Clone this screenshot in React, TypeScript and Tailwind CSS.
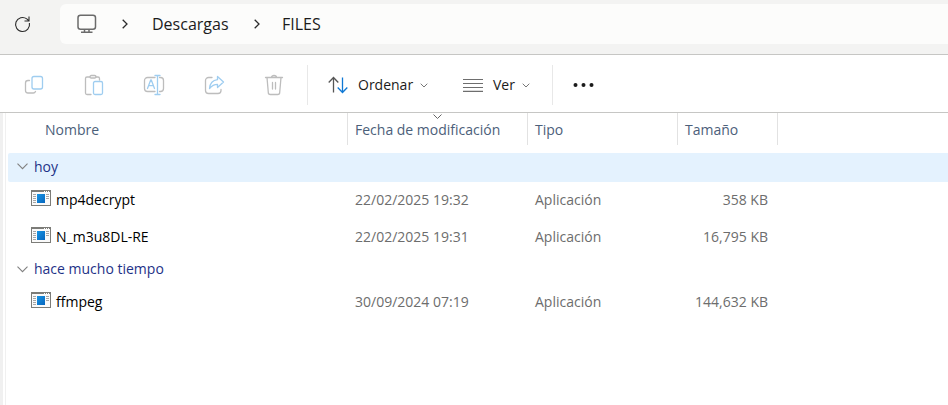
import { Fragment, useState } from "react"
import type { ReactNode } from "react"

interface FileEntry {
    name: string
    modified: string
    type: string
    size: string
}

interface FileGroup {
    label: string
    files: FileEntry[]
}

const GROUPS: FileGroup[] = [
    {
        label: "hoy",
        files: [
            { name: "mp4decrypt", modified: "22/02/2025 19:32", type: "Aplicación", size: "358 KB" },
            { name: "N_m3u8DL-RE", modified: "22/02/2025 19:31", type: "Aplicación", size: "16,795 KB" },
        ],
    },
    {
        label: "hace mucho tiempo",
        files: [
            { name: "ffmpeg", modified: "30/09/2024 07:19", type: "Aplicación", size: "144,632 KB" },
        ],
    },
]

const GRAY = "#bdbdbd"
const BLUE = "#9fcdf0"

function Icon({ children }: { children: ReactNode }) {
    return (
        <svg width="24" height="24" viewBox="0 0 24 24" fill="none" strokeWidth="1.3" strokeLinecap="round" strokeLinejoin="round" aria-hidden="true">
            {children}
        </svg>
    )
}

function CopyIcon() {
    return (
        <Icon>
            <path stroke={GRAY} d="M7.5 7.5H6A2.5 2.5 0 0 0 3.5 10v7.5A2.5 2.5 0 0 0 6 20h5a2.5 2.5 0 0 0 2.5-1.5" />
            <rect stroke={BLUE} x="10" y="3.5" width="10.5" height="12.5" rx="2" />
        </Icon>
    )
}

function PasteIcon() {
    return (
        <Icon>
            <path stroke={GRAY} d="M8 4H5a1.5 1.5 0 0 0-1.5 1.5V20A1.5 1.5 0 0 0 5 21.5h4M13.5 4H16a1.5 1.5 0 0 1 1.5 1.5V7" />
            <rect stroke={GRAY} x="8" y="2.5" width="6" height="2.5" rx="1.2" />
            <rect stroke={BLUE} x="11.5" y="8.5" width="9" height="13" rx="1.5" />
        </Icon>
    )
}

function RenameIcon() {
    return (
        <Icon>
            <path stroke={GRAY} d="M13 4.5H5.5a3 3 0 0 0-3 3v8a3 3 0 0 0 3 3H13M17.5 4.5h1a3 3 0 0 1 3 3v8a3 3 0 0 1-3 3h-1" />
            <path stroke={BLUE} d="M5.5 15.5l3.2-8.5h.6l3.2 8.5M6.700 12.7h4.6" />
            <path stroke={BLUE} d="M15.500 2.500v19M13 2.500h5M13 21.500h5" />
        </Icon>
    )
}

function ShareIcon() {
    return (
        <Icon>
            <path stroke={GRAY} d="M10 4.5H6.5a3 3 0 0 0-3 3v10a3 3 0 0 0 3 3h9.500a3 3 0 0 0 3-3v-1" />
            <path stroke={BLUE} d="M15.500 3.500l6 5.500-6 5.500v-3.200c-3.500 0-5.500 1-8 4.200.5-5 3-8.300 8-8.800z" />
        </Icon>
    )
}

function DeleteIcon() {
    return (
        <Icon>
            <path stroke={GRAY} d="M3.5 4.5h17M9.5 4.5a2.5 2 0 0 1 5 0M5 4.5l1.3 15A2 2 0 0 0 8.3 21.5h7.4a2 2 0 0 0 2-2L19 4.5M10.5 9.5v6.500M13.5 9.5v6.500" />
        </Icon>
    )
}

function SortIcon() {
    return (
        <svg width="20" height="18" viewBox="0 0 20 18" fill="none" strokeWidth="1.3" aria-hidden="true">
            <path stroke="#555555" d="M5.5 16.5v-15M.7 6.5l4.8-5 4.8 5" />
            <path stroke="#0f78d4" d="M14.5 1.5v15M9.7 11.5l4.8 5 4.8-5" />
        </svg>
    )
}

function LinesIcon() {
    return (
        <svg width="20" height="14" viewBox="0 0 20 14" fill="none" stroke="#6e6e6e" strokeWidth="1.2" aria-hidden="true">
            <path d="M0 1.500h20M0 5.500h20M0 9.500h20M0 13.300h20" />
        </svg>
    )
}

function MonitorIcon() {
    return (
        <svg width="20" height="20" viewBox="0 0 20 20" fill="none" stroke="#6b6b6b" strokeWidth="1.5" aria-hidden="true">
            <rect x="1" y="1.2" width="17.5" height="14" rx="2.5" />
            <path d="M7.5 15.5v3M12 15.5v3M4 18.300h11.5" />
        </svg>
    )
}

function RefreshIcon() {
    return (
        <svg width="18" height="18" viewBox="0 0 18 18" fill="none" stroke="#2b2b2b" strokeWidth="1.1" aria-hidden="true">
            <path d="M15.400 8A7 7 0 1 1 12.800 3.900L15 5.800M15 1.500v4.500H10.500" />
        </svg>
    )
}

function CrumbChevron() {
    return (
        <svg width="6" height="10" viewBox="0 0 6 10" fill="none" stroke="#2b2b2b" strokeWidth="1.3" aria-hidden="true">
            <path d="M.7.7L5 5 .7 9.3" />
        </svg>
    )
}

function SmallChevron() {
    return (
        <svg width="8" height="5" viewBox="0 0 8 5" fill="none" stroke="#777777" aria-hidden="true">
            <path d="M.7.7L4 4 7.3.7" />
        </svg>
    )
}

function GroupChevron({ open }: { open: boolean }) {
    return (
        <svg className={open ? "" : "-rotate-90"} width="11" height="7" viewBox="0 0 11 7" fill="none" stroke="#808080" strokeWidth="1.1" aria-hidden="true">
            <path d="M.5.7l5 5 5-5" />
        </svg>
    )
}

function AppIcon() {
    return (
        <svg width="20" height="16" viewBox="0 0 20 16" aria-hidden="true">
            <defs>
                <linearGradient id="appBlue" x1="0" y1="0" x2="1" y2="1">
                    <stop offset="0" stopColor="#1794e4" />
                    <stop offset="1" stopColor="#0766be" />
                </linearGradient>
            </defs>
            <rect x=".5" y=".5" width="19" height="15" fill="#fafafa" stroke="#7c7c78" />
            <path fill="#7c7c78" d="M0 0h20v2H0z" />
            <path stroke="#ffffff" d="M13 1.5h1M15 1.5h1M17 1.5h1" />
            <path stroke="#a6a6a6" d="M2 4.5h3M2 6.5h3M2 8.5h3M2 10.5h3M2 12.5h3M15 4.5h3M15 6.5h3M15 8.5h3" />
            <path fill="url(#appBlue)" d="M6 4h8v9H6z" />
        </svg>
    )
}

const ACTIONS = [
    { label: "Copiar", icon: <CopyIcon /> },
    { label: "Pegar", icon: <PasteIcon /> },
    { label: "Cambiar nombre", icon: <RenameIcon /> },
    { label: "Compartir", icon: <ShareIcon /> },
    { label: "Eliminar", icon: <DeleteIcon /> },
]

function HeaderCell({ label, sorted }: { label: string, sorted?: boolean }) {
    return (
        <th scope="col" className="h-10 p-0 align-top font-normal" aria-sort={sorted ? "descending" : undefined}>
            <button type="button" className="relative flex h-8 w-full items-center border-r border-[#e2e2e2] pl-[7px] pt-[2px] text-left">
                {sorted && (
                    <span className="absolute inset-x-0 top-[1px] flex justify-center">
                        <svg width="9" height="5" viewBox="0 0 9 5" fill="none" stroke="#666666" aria-hidden="true">
                            <path d="M.5.5l4 4 4-4" />
                        </svg>
                    </span>
                )}
                {label}
            </button>
        </th>
    )
}

export default function App() {
    const [closed, setClosed] = useState<string[]>([])

    const toggle = (label: string) => {
        setClosed(closed.includes(label) ? closed.filter((item) => item !== label) : [...closed, label])
    }

    return (
        <div className="flex min-h-screen flex-col bg-white font-['Open_Sans','Noto_Sans',sans-serif] text-sm text-[#1b1b1b]">
            <nav className="flex h-[55px] items-start border-b border-[#c6c6c4] bg-[#f3f3f2] pt-1" aria-label="Ruta">
                <button type="button" className="flex h-10 w-[60px] items-center pl-[14px]" aria-label="Actualizar">
                    <RefreshIcon />
                </button>
                <ol className="flex h-10 flex-1 items-center rounded-l-md bg-[#fcfcfb] pl-[17px] text-base">
                    <li className="flex w-[75px] items-center">
                        <a href="#equipo" aria-label="Este equipo"><MonitorIcon /></a>
                        <span className="ml-[25px]"><CrumbChevron /></span>
                    </li>
                    <li className="flex w-[130px] items-center">
                        <a href="#descargas" className="w-[102px]">Descargas</a>
                        <CrumbChevron />
                    </li>
                    <li>
                        <a href="#files" aria-current="page">FILES</a>
                    </li>
                </ol>
            </nav>

            <div className="flex h-[58px] items-center border-b border-[#c6c6c4] pl-1 pb-px pt-1" role="toolbar" aria-label="Acciones">
                {ACTIONS.map((action) => (
                    <button key={action.label} type="button" disabled className="flex h-10 w-[60px] items-center justify-center" aria-label={action.label}>
                        {action.icon}
                    </button>
                ))}
                <span className="ml-[3px] h-10 w-px bg-[#e8e8e8]"></span>
                <button type="button" className="ml-5 flex h-10 items-center">
                    <SortIcon />
                    <span className="ml-[10px] w-[62px] text-left">Ordenar</span>
                    <SmallChevron />
                </button>
                <button type="button" className="ml-[35px] flex h-10 items-center">
                    <LinesIcon />
                    <span className="ml-[10px] w-[29px] text-left">Ver</span>
                    <SmallChevron />
                </button>
                <span className="ml-[22px] h-10 w-px bg-[#e8e8e8]"></span>
                <button type="button" className="ml-5 flex h-10 items-center" aria-label="Ver más">
                    <svg width="22" height="4" viewBox="0 0 22 4" fill="#1b1b1b" aria-hidden="true">
                        <circle cx="2.5" cy="2" r="2" />
                        <circle cx="10.5" cy="2" r="2" />
                        <circle cx="18.5" cy="2" r="2" />
                    </svg>
                </button>
            </div>

            <main className="flex flex-1">
                <div className="w-[3px] shrink-0 bg-[#f0f0f0]"></div>
                <div className="ml-[2px] w-px shrink-0 bg-[#f0f0f0]"></div>
                <div className="ml-[2px] flex-1">
                    <table className="w-full table-fixed border-collapse text-left">
                        <colgroup>
                            <col className="w-[340px]" />
                            <col className="w-[180px]" />
                            <col className="w-[150px]" />
                            <col className="w-[100px]" />
                            <col />
                        </colgroup>
                        <thead className="text-[#4c607a]">
                            <tr>
                                <th scope="col" className="h-10 p-0 align-top font-normal">
                                    <button type="button" className="flex h-8 w-full items-center border-r border-[#e2e2e2] pl-[37px] pt-[2px] text-left">Nombre</button>
                                </th>
                                <HeaderCell label="Fecha de modificación" sorted />
                                <HeaderCell label="Tipo" />
                                <HeaderCell label="Tamaño" />
                                <td></td>
                            </tr>
                        </thead>
                        <tbody>
                            {GROUPS.map((group, index) => (
                                <Fragment key={group.label}>
                                    <tr>
                                        <th colSpan={5} scope="rowgroup" className="p-0 font-normal">
                                            <button
                                                type="button"
                                                aria-expanded={!closed.includes(group.label)}
                                                onClick={() => toggle(group.label)}
                                                className={`flex w-full items-center gap-[6px] rounded-l-xs pb-[2px] pl-[9px] text-[#1e3287] ${index === 0 ? "h-[29px] bg-[#e4f2fe]" : "h-7"}`}
                                            >
                                                <GroupChevron open={!closed.includes(group.label)} />
                                                {group.label}
                                            </button>
                                        </th>
                                    </tr>
                                    {!closed.includes(group.label) && group.files.map((file) => (
                                        <tr key={file.name} className="h-[37px] text-[#6d6d6d]">
                                            <td className="p-0 pb-[2px] pl-[23px] text-black">
                                                <div className="flex items-center gap-[5px]">
                                                    <span className="shrink-0 pb-1"><AppIcon /></span>
                                                    {file.name}
                                                </div>
                                            </td>
                                            <td className="p-0 pb-[2px] pl-[7px]">{file.modified}</td>
                                            <td className="p-0 pb-[2px] pl-[7px]">{file.type}</td>
                                            <td className="p-0 pr-[10px] pb-[2px] text-right">{file.size}</td>
                                            <td></td>
                                        </tr>
                                    ))}
                                </Fragment>
                            ))}
                        </tbody>
                    </table>
                </div>
            </main>
        </div>
    )
}
